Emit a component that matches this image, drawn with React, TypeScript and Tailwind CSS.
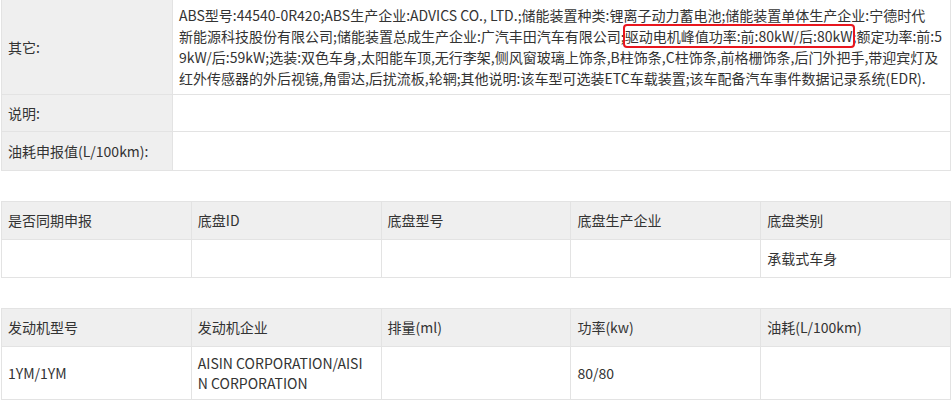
const font = { fontFamily: '"Microsoft YaHei", "Noto Sans CJK SC", "Noto Sans", sans-serif' };

const chassisHead = ["是否同期申报", "底盘ID", "底盘型号", "底盘生产企业", "底盘类别"];
const chassisBody = ["", "", "", "", "承载式车身"];
const engineHead = ["发动机型号", "发动机企业", "排量(ml)", "功率(kw)", "油耗(L/100km)"];

function Label({ children, h }: { children?: React.ReactNode; h: string }) {
  return <div className={`bg-[#efefef] flex items-center pl-[6px] ${h}`}>{children}</div>;
}

function Value({ children, h }: { children?: React.ReactNode; h: string }) {
  return <div className={`bg-white flex items-center pl-[6px] ${h}`}>{children}</div>;
}

function GridTable({ head, body, bodyH }: { head: string[]; body: React.ReactNode[]; bodyH: string }) {
  return (
    <div className="ml-px w-[950px] grid grid-cols-5 gap-px p-px bg-[#e3e3e3]">
      {head.map((t, i) => (
        <div key={"h" + i} className="h-[37px] bg-[#efefef] flex items-center pl-[6px]">
          {t}
        </div>
      ))}
      {body.map((t, i) => (
        <div key={"b" + i} className={`${bodyH} bg-white flex items-center pl-[6px]`}>
          {t}
        </div>
      ))}
    </div>
  );
}

export default function App() {
  return (
    <div className="w-[951px] h-[401px] overflow-hidden bg-white text-[14px] leading-[21px] text-[#333]" style={font}>
      <div className="-mt-px ml-px w-[950px] grid grid-cols-[170px_1fr] gap-px p-px bg-[#e3e3e3]">
        <Label h="h-[94px]">其它:</Label>
        <Value h="h-[94px]">
          <div className="whitespace-nowrap">
            <div>ABS型号:44540-0R420;ABS生产企业:ADVICS CO., LTD.;储能装置种类:锂离子动力蓄电池;储能装置单体生产企业:宁德时代</div>
            <div>
              新能源科技股份有限公司;储能装置总成生产企业:广汽丰田汽车有限公司;
              <span className="outline-2 outline-[#e8161e] rounded-[2px] outline-offset-0">驱动电机峰值功率:前:80kW/后:80kW</span>
              ;额定功率:前:5
            </div>
            <div>9kW/后:59kW;选装:双色车身,太阳能车顶,无行李架,侧风窗玻璃上饰条,B柱饰条,C柱饰条,前格栅饰条,后门外把手,带迎宾灯及</div>
            <div>红外传感器的外后视镜,角雷达,后扰流板,轮辋;其他说明:该车型可选装ETC车载装置;该车配备汽车事件数据记录系统(EDR).</div>
          </div>
        </Value>
        <Label h="h-[36px]">说明:</Label>
        <Value h="h-[36px]" />
        <Label h="h-[38px]">油耗申报值(L/100km):</Label>
        <Value h="h-[38px]" />
      </div>

      <div className="h-[30px]" />
      <GridTable head={chassisHead} body={chassisBody} bodyH="h-[37px]" />

      <div className="h-[30px]" />
      <GridTable
        head={engineHead}
        bodyH="h-[52px]"
        body={[
          "1YM/1YM",
          <div key="e" className="whitespace-nowrap leading-[20px]">
            <div>AISIN CORPORATION/AISI</div>
            <div>N CORPORATION</div>
          </div>,
          "",
          "80/80",
          "",
        ]}
      />
    </div>
  );
}
